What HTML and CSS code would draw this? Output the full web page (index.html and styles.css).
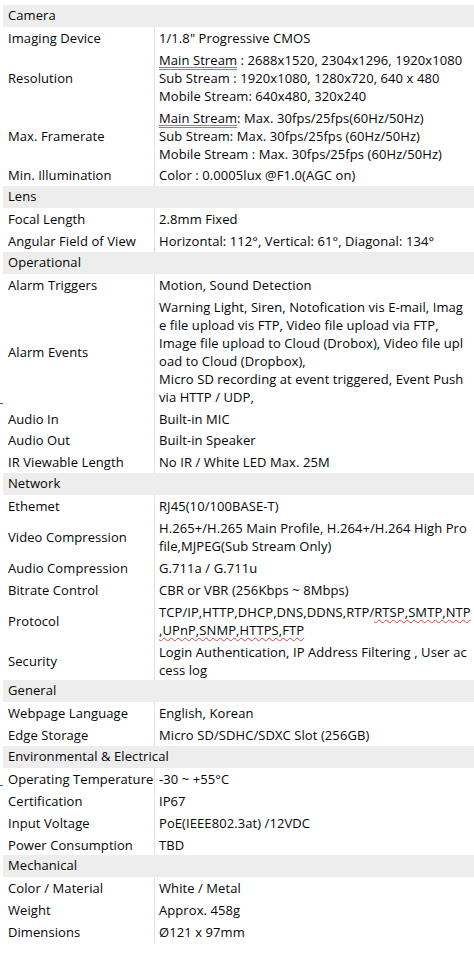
FILE: index.html
```html
<!DOCTYPE html>
<html>
<head>
<meta charset="utf-8">
<link rel="stylesheet" href="styles.css">
</head>
<body>
<div class="sheet">
  <div class="sec">Camera</div>
  <div class="row"><div class="k">Imaging Device</div><div class="v"><div>1/1.8" Progressive CMOS</div></div></div>
  <div class="row"><div class="k">Resolution</div><div class="v"><div><span class="gram">Main Stream</span> : 2688x1520, 2304x1296, 1920x1080</div><div>Sub Stream : 1920x1080, 1280x720, 640 x 480</div><div>Mobile Stream: 640x480, 320x240</div></div></div>
  <div class="row"><div class="k">Max. Framerate</div><div class="v"><div><span class="gram">Main Stream</span>: Max. 30fps/25fps(60Hz/50Hz)</div><div>Sub Stream: Max. 30fps/25fps (60Hz/50Hz)</div><div>Mobile Stream : Max. 30fps/25fps (60Hz/50Hz)</div></div></div>
  <div class="row"><div class="k">Min. Illumination</div><div class="v"><div>Color : 0.0005lux @F1.0(AGC on)</div></div></div>
  <div class="sec">Lens</div>
  <div class="row"><div class="k">Focal Length</div><div class="v"><div>2.8mm Fixed</div></div></div>
  <div class="row"><div class="k">Angular Field of View</div><div class="v"><div>Horizontal: 112°, Vertical: 61°, Diagonal: 134°</div></div></div>
  <div class="sec">Operational</div>
  <div class="row"><div class="k">Alarm Triggers</div><div class="v"><div>Motion, Sound Detection</div></div></div>
  <div class="row mark"><div class="k">Alarm Events</div><div class="v"><div>Warning Light, Siren, Notofication vis E-mail, Imag</div><div>e file upload vis FTP, Video file upload via FTP,</div><div>Image file upload to Cloud (Drobox), Video file upl</div><div>oad to Cloud (Dropbox),</div><div>Micro SD recording at event triggered, Event Push</div><div>via HTTP / UDP,</div></div></div>
  <div class="row"><div class="k">Audio In</div><div class="v"><div>Built-in MIC</div></div></div>
  <div class="row"><div class="k">Audio Out</div><div class="v"><div>Built-in Speaker</div></div></div>
  <div class="row"><div class="k">IR Viewable Length</div><div class="v"><div>No IR / White LED Max. 25M</div></div></div>
  <div class="sec">Network</div>
  <div class="row"><div class="k">Ethemet</div><div class="v"><div>RJ45(10/100BASE-T)</div></div></div>
  <div class="row"><div class="k">Video Compression</div><div class="v"><div>H.265+/H.265 Main Profile, H.264+/H.264 High Pro</div><div>file,MJPEG(Sub Stream Only)</div></div></div>
  <div class="row"><div class="k">Audio Compression</div><div class="v"><div>G.711a / G.711u</div></div></div>
  <div class="row"><div class="k">Bitrate Control</div><div class="v"><div>CBR or VBR (256Kbps ~ 8Mbps)</div></div></div>
  <div class="row"><div class="k">Protocol</div><div class="v"><div>TCP/IP,HTTP,DHCP,DNS,DDNS,RTP/<span class="spell">RTSP,SMTP,NTP</span></div><div><span class="spell">,UPnP,SNMP,HTTPS,FTP</span></div></div></div>
  <div class="row"><div class="k">Security</div><div class="v"><div>Login Authentication, IP Address Filtering , User ac</div><div>cess log</div></div></div>
  <div class="sec">General</div>
  <div class="row"><div class="k">Webpage Language</div><div class="v"><div>English, Korean</div></div></div>
  <div class="row"><div class="k">Edge Storage</div><div class="v"><div>Micro SD/SDHC/SDXC Slot (256GB)</div></div></div>
  <div class="sec">Environmental &amp; Electrical</div>
  <div class="row mark"><div class="k">Operating Temperature</div><div class="v"><div>-30 ~ +55°C</div></div></div>
  <div class="row"><div class="k">Certification</div><div class="v"><div>IP67</div></div></div>
  <div class="row"><div class="k">Input Voltage</div><div class="v"><div>PoE(IEEE802.3at) /12VDC</div></div></div>
  <div class="row"><div class="k">Power Consumption</div><div class="v"><div>TBD</div></div></div>
  <div class="sec">Mechanical</div>
  <div class="row"><div class="k">Color / Material</div><div class="v"><div>White / Metal</div></div></div>
  <div class="row"><div class="k">Weight</div><div class="v"><div>Approx. 458g</div></div></div>
  <div class="row"><div class="k">Dimensions</div><div class="v"><div>Ø121 x 97mm</div></div></div>
</div>
</body>
</html>
```

FILE: styles.css
```css
html, body {
  margin: 0;
  padding: 0;
  background: #ffffff;
}
body {
  font-family: "Open Sans", "Noto Sans", sans-serif;
  font-size: 13px;
  letter-spacing: 0.08px;
  color: #050505;
}
.sheet {
  padding: 5px 0 0 3px;
  display: flex;
  flex-direction: column;
}
.sec {
  background: #ededed;
  height: 21.9px;
  line-height: 21.9px;
  padding-left: 5px;
  white-space: nowrap;
}
.row {
  display: grid;
  grid-template-columns: 152px 1fr;
  position: relative;
}
.k {
  display: flex;
  align-items: center;
  padding-left: 5px;
  border-right: 1px solid #e3e3e3;
  white-space: nowrap;
  line-height: 18px;
}
.v {
  padding: 1.95px 0 1.95px 4px;
  line-height: 18px;
  white-space: nowrap;
}
.gram {
  text-decoration: underline double #5b8fd6;
  text-underline-offset: 2px;
}
.spell {
  text-decoration: underline wavy #e04040;
  text-decoration-thickness: 1px;
  text-underline-offset: 2px;
}
.mark::before {
  content: "";
  position: absolute;
  left: -3px;
  bottom: 4px;
  width: 3px;
  height: 1px;
  background: #2f5ea8;
}
```
